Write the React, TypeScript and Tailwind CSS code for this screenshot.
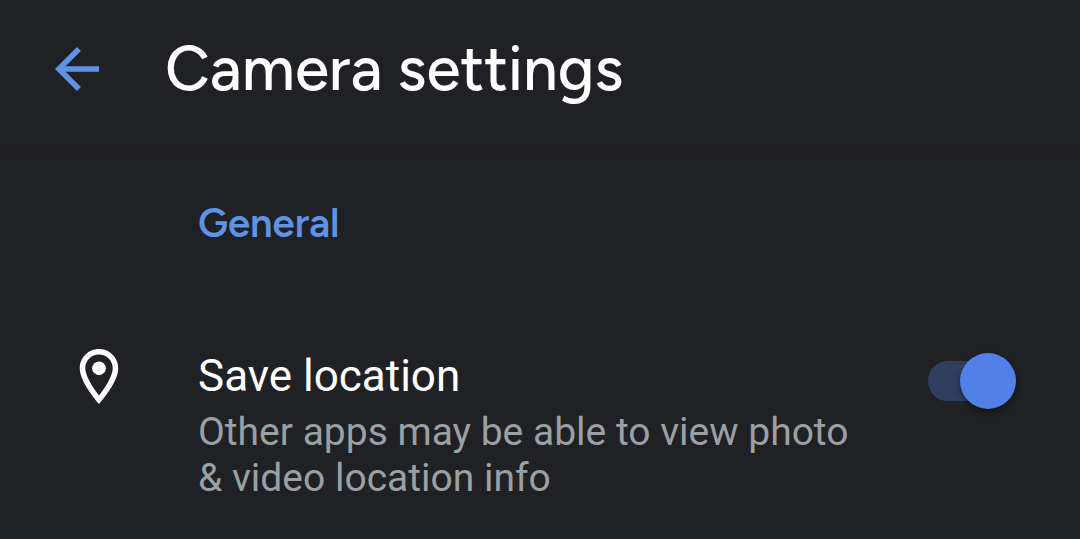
import React from "react";

function BackIcon() {
  return (
    <svg viewBox="4 4 16 16" className="h-11 w-11" fill="currentColor" aria-hidden="true">
      <path d="M20 11H7.83l5.59-5.59L12 4l-8 8 8 8 1.41-1.41L7.83 13H20v-2z" />
    </svg>
  );
}

function PinIcon() {
  return (
    <svg viewBox="5 2 14 20" className="mt-px h-[55px] w-10 shrink-0" fill="currentColor" aria-hidden="true">
      <path d="M12 2C8.13 2 5 5.13 5 9c0 5.25 7 13 7 13s7-7.75 7-13c0-3.87-3.13-7-7-7zM7 9c0-2.76 2.24-5 5-5s5 2.24 5 5c0 2.88-2.88 7.19-5 9.88C9.92 16.21 7 11.85 7 9z" />
      <circle cx="12" cy="9" r="2.5" />
    </svg>
  );
}

export default function App() {
  return (
    <div className="min-h-screen bg-[#202124] font-[Roboto,sans-serif] text-white">
      <header className="flex items-center border-b-2 border-[#1e1f20] px-[55px] pt-[30px] pb-[38px] shadow-[0_2px_6px_#1e1f20]">
        <button type="button" aria-label="Back" className="shrink-0 text-[#5f93e5]">
          <BackIcon />
        </button>
        <h1 className="ml-[66px] font-[Figtree,Lato,sans-serif] text-[62px] leading-[78px] font-medium">
          Camera settings
        </h1>
      </header>
      <main>
        <h2 className="pt-[51px] pl-[198px] font-[Figtree,Lato,sans-serif] text-[40px] leading-[48px] font-semibold text-[#5f93e5]">
          General
        </h2>
        <div className="flex items-start pt-[101px] pr-16 pl-[79px]">
          <PinIcon />
          <label htmlFor="save-location" className="ml-[79px] min-w-0 flex-1">
            <span className="block text-[44px] leading-[56px]">Save location</span>
            <span className="mt-[5px] block max-w-[670px] text-[39px] leading-[46px] text-[#9aa0a3]">
              Other apps may be able to view photo &amp; video location info
            </span>
          </label>
          <input
            id="save-location"
            type="checkbox"
            role="switch"
            defaultChecked
            className="relative mt-[5px] flex h-14 w-[88px] shrink-0 cursor-pointer appearance-none items-center before:h-10 before:w-20 before:rounded-full before:bg-[#5f6368] after:absolute after:top-0 after:left-0 after:size-14 after:rounded-full after:bg-[#bdc1c6] after:shadow-[0_3px_6px_rgba(0,0,0,0.45)] checked:before:bg-[#303f60] checked:after:left-8 checked:after:bg-[#5180e6]"
          />
        </div>
      </main>
    </div>
  );
}
